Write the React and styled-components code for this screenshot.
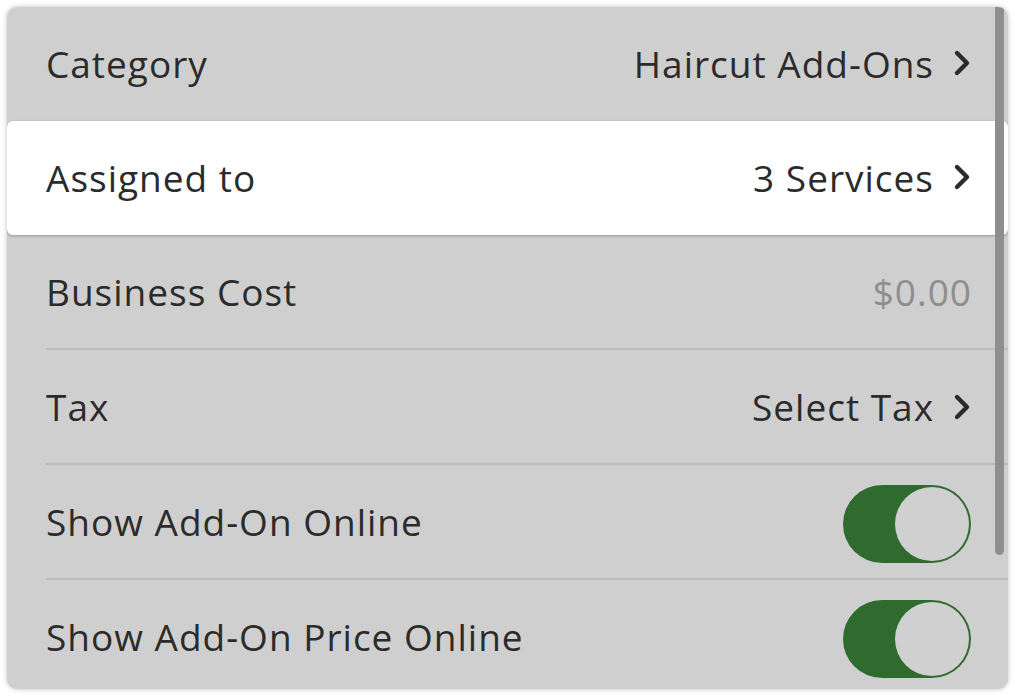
import React from "react";
import styled, { createGlobalStyle } from "styled-components";

const Global = createGlobalStyle`
  html, body { margin: 0; padding: 0; background: #ffffff; }
  body { font-family: "Open Sans", "Lato", sans-serif; }
  * { box-sizing: border-box; }
`;

const Page = styled.div`
  width: 1015px;
  height: 697px;
  padding: 7px;
  background: #ffffff;
`;

const Panel = styled.div`
  position: relative;
  width: 1001px;
  height: 682px;
  background: #cfcfcf;
  border-radius: 10px;
  box-shadow: 0 0 5px rgba(0, 0, 0, 0.25);
  overflow: hidden;
  display: flex;
  flex-direction: column;
`;

const Row = styled.div`
  flex: 0 0 ${(p) => p.$h || 115}px;
  display: flex;
  align-items: center;
  justify-content: space-between;
  padding: 0 36px 2px 39px;
  position: relative;
  background: ${(p) => (p.$active ? "#ffffff" : "transparent")};
  border-radius: ${(p) => (p.$active ? "6px" : "0")};
  box-shadow: ${(p) => (p.$active ? "0 1px 3px rgba(0,0,0,0.28)" : "none")};
  z-index: ${(p) => (p.$active ? 1 : 0)};
  &::after {
    content: "";
    display: ${(p) => (p.$sep ? "block" : "none")};
    position: absolute;
    left: 39px;
    right: 0;
    bottom: 0;
    height: 2px;
    background: #bcbcbc;
  }
`;

const Label = styled.span`
  font-size: 37px;
  line-height: 1;
  color: #2b2b2b;
  letter-spacing: 1px;
`;

const Value = styled.span`
  display: flex;
  align-items: center;
  gap: 18px;
  font-size: 37px;
  line-height: 1;
  letter-spacing: 1px;
  color: ${(p) => (p.$muted ? "#8e8e8e" : "#2b2b2b")};
`;

const Chevron = () => (
  <svg width="20" height="28" viewBox="0 0 20 28" aria-hidden="true">
    <path
      d="M5 4 L15 14 L5 24"
      fill="none"
      stroke="#2b2b2b"
      strokeWidth="4.4"
      strokeLinecap="round"
      strokeLinejoin="round"
    />
  </svg>
);

const Toggle = styled.div`
  width: 128px;
  height: 78px;
  border-radius: 39px;
  background: #2f6b2f;
  position: relative;
  margin: 5px 1px 0 0;
  &::after {
    content: "";
    position: absolute;
    right: 2px;
    top: 2px;
    width: 74px;
    height: 74px;
    border-radius: 50%;
    background: #d0d0d0;
  }
`;

const Scrollbar = styled.div`
  position: absolute;
  right: 4px;
  top: 0;
  width: 9px;
  height: 548px;
  background: #8e8e8e;
  border-radius: 0 0 5px 5px;
  z-index: 2;
`;

const rows = [
  { label: "Category", value: "Haircut Add-Ons", chevron: true, h: 114 },
  { label: "Assigned to", value: "3 Services", chevron: true, active: true, h: 114 },
  { label: "Business Cost", value: "$0.00", muted: true, sep: true },
  { label: "Tax", value: "Select Tax", chevron: true, sep: true },
  { label: "Show Add-On Online", toggle: true, sep: true },
  { label: "Show Add-On Price Online", toggle: true },
];

export default function App() {
  return (
    <Page>
      <Global />
      <Panel>
        {rows.map((r) => (
          <Row key={r.label} $active={r.active} $sep={r.sep} $h={r.h}>
            <Label>{r.label}</Label>
            {r.toggle ? (
              <Toggle />
            ) : (
              <Value $muted={r.muted}>
                {r.value}
                {r.chevron && <Chevron />}
              </Value>
            )}
          </Row>
        ))}
        <Scrollbar />
      </Panel>
    </Page>
  );
}
